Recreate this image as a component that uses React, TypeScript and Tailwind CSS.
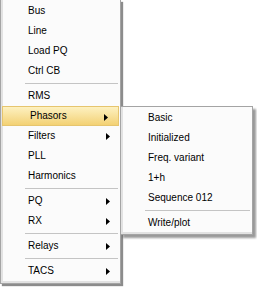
import React from 'react'

type Entry = { label?: string; sub?: boolean; sep?: boolean; active?: boolean }

const MAIN: Entry[] = [
  { label: 'Bus' },
  { label: 'Line' },
  { label: 'Load PQ' },
  { label: 'Ctrl CB' },
  { sep: true },
  { label: 'RMS' },
  { label: 'Phasors', sub: true, active: true },
  { label: 'Filters', sub: true },
  { label: 'PLL' },
  { label: 'Harmonics' },
  { sep: true },
  { label: 'PQ', sub: true },
  { label: 'RX', sub: true },
  { sep: true },
  { label: 'Relays', sub: true },
  { sep: true },
  { label: 'TACS', sub: true },
]

const PHASORS: Entry[] = [
  { label: 'Basic' },
  { label: 'Initialized' },
  { label: 'Freq. variant' },
  { label: '1+h' },
  { label: 'Sequence 012' },
  { sep: true },
  { label: 'Write/plot' },
]

function Arrow() {
  return (
    <svg width="4" height="7" viewBox="0 0 4 7" className="absolute right-[10px] top-[7px]">
      <path d="M0 0 L4 3.5 L0 7 Z" fill="#000" />
    </svg>
  )
}

function MenuItems({ items }: { items: Entry[] }) {
  return (
    <>
      {items.map((it, i) =>
        it.sep ? (
          <div key={i} className="h-[5px] flex items-center pl-[24px] pr-[2px]">
            <div className="w-full border-t border-[#c4c4c4]" />
          </div>
        ) : (
          <div
            key={i}
            className={`relative h-[20px] flex items-center pl-[27px] ${
              it.active
                ? 'mx-[1px] pl-[26px] bg-gradient-to-b from-[#fdf1c0] to-[#f3d173] border border-[#e6c56e]'
                : ''
            }`}
          >
            <span>{it.label}</span>
            {it.sub && <Arrow />}
          </div>
        )
      )}
    </>
  )
}

export default function App() {
  return (
    <div className="relative w-[257px] h-[288px] bg-white text-[10px] text-black font-['Liberation_Sans',Arial,sans-serif] leading-none">
      {/* main menu */}
      <div className="w-[121px] h-[284px] pt-[1px] border border-t-0 border-[#a4a4a4] bg-[#fbfbfb] shadow-[2px_2px_1px_rgba(0,0,0,0.45),inset_2px_0_0_#e2e2e2,inset_0_-2px_0_#e2e2e2]">
        <MenuItems items={MAIN} />
      </div>

      {/* Phasors submenu */}
      <div className="absolute left-[120px] top-[106px] w-[133px] pt-[1px] pb-[1px] border border-[#a4a4a4] bg-[#fbfbfb] shadow-[3px_3px_2px_rgba(0,0,0,0.4),inset_2px_0_0_#e2e2e2,inset_0_-2px_0_#e2e2e2]">
        <MenuItems items={PHASORS} />
      </div>
    </div>
  )
}
